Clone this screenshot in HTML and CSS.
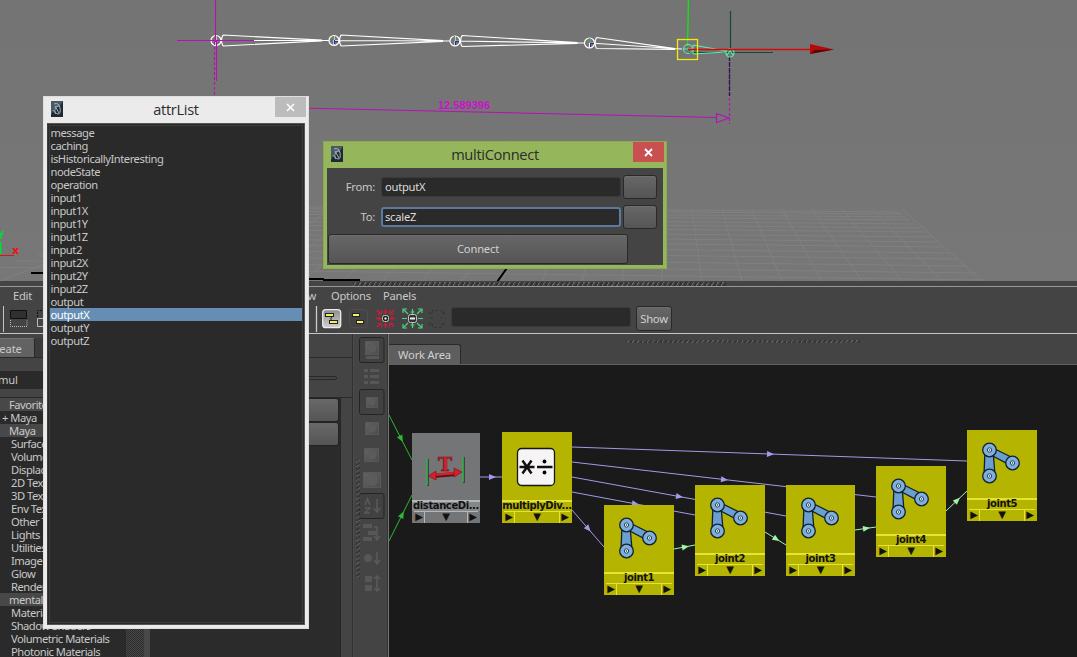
FILE: index.html
```html
<!DOCTYPE html>
<html lang="en">
<head>
<meta charset="utf-8">
<title>Hypershade</title>
<link rel="stylesheet" href="styles.css">
<script src="app.js" defer></script>
</head>
<body>
<svg width="0" height="0" class="defs">
  <defs>
    <symbol id="joint" viewBox="0 0 44 44">
      <g stroke="#102030" stroke-width="1.3" fill="#6b9fcf">
        <path d="M12 6L34 17L31 24L10 13Z"/>
        <path d="M6 9H14L16 34H5Z"/>
        <circle cx="10.5" cy="9" r="6.8" fill="#7fb0dd"/><circle cx="33.5" cy="22" r="6.8" fill="#7fb0dd"/><circle cx="10.5" cy="35" r="6.8" fill="#7fb0dd"/>
      </g>
      <g fill="#e8f4fc" stroke="#24465f" stroke-width="1"><circle cx="10.5" cy="9" r="2.2"/><circle cx="33.5" cy="22" r="2.2"/><circle cx="10.5" cy="35" r="2.2"/></g>
      <g fill="#17303f"><circle cx="10.5" cy="9" r=".8"/><circle cx="33.5" cy="22" r=".8"/><circle cx="10.5" cy="35" r=".8"/></g>
    </symbol>
    <linearGradient id="ball" x1="0" y1="0" x2="1" y2="1"><stop offset="0" stop-color="#626262"/><stop offset="1" stop-color="#4c4c4c"/></linearGradient>
    <linearGradient id="lit" x1="0" y1="0" x2="0" y2="1"><stop offset="0" stop-color="#8c8c8c"/><stop offset="1" stop-color="#d0d0d0"/></linearGradient>
    <symbol id="logo" viewBox="0 0 12 16">
      <rect width="12" height="16" fill="#202a33"/><path d="M0 0H12L9 5L3 8L0 14Z" fill="#4b5962"/>
      <path d="M3 3Q8 1 9 7T7 13Q3 12 4 8T8 5M4 5L8 12M2 9L5 13" fill="none" stroke="#a4b3bc" stroke-width="1"/>
    </symbol>
  </defs>
</svg>

<main class="app">
  <section class="viewport">
    <svg class="scene" width="1077" height="281" viewBox="0 0 1077 281">
      <g id="grid" stroke="#808080" stroke-width="1" fill="none"></g>
      <g stroke="#000" stroke-width="2"><path d="M31 273H44M309 279H324M323 280H360M507 268L497 282"/></g>
      <g id="bones" stroke="#fff" fill="none" stroke-width="1.2"></g>
      <g stroke="#b80fb8" stroke-width="1.1" fill="none">
        <path d="M215.500 0V42M177 40.500H254M216.500 40V81"/>
        <path d="M214.500 42V96M729.500 58V124" stroke-dasharray="3 2"/>
        <path d="M300 108L717 117.500M716.500 113.500V122.500L729 118Z"/>
      </g>
      <text x="438" y="109" class="measure">12.589396</text>
      <path d="M333.500 36V40M454.500 36V41M589.500 38V43" stroke="#3aa85a"/>
      <path d="M334 41.500H338M334.500 40V44M455 41.500H459M455.500 41V45M590 43.500H594M590.500 43V47" stroke="#2a2aa0"/>
      <path d="M730.500 11V50M689 52.500H773" stroke="#124a32" stroke-width="1.2"/>
      <path d="M729.500 56V96" stroke="#2a1650" stroke-dasharray="5 1" stroke-width="1.3"/>
      <path d="M688.500 0L687.500 46" stroke="#16e016" stroke-width="1.4"/>
      <g stroke="#5df0a8" fill="none" stroke-width="1.1"><circle cx="688" cy="49" r="4.500"/><path d="M693 45L726 51M693 54L726 52M693 45V54M684 49H693"/><circle cx="730" cy="53" r="4"/><path d="M727 55L730 51L733 55"/></g>
      <path d="M688 49.500H811" stroke="#d90808" stroke-width="1.5"/><path d="M810 44L834 49.500L810 54Z" fill="#b80808"/><path d="M810 54L834 49.500L815 50Z" fill="#520808"/>
      <rect x="677.500" y="39.500" width="20" height="20" fill="none" stroke="#f2ea10" stroke-width="1.3"/>
      <path d="M0 242V254" stroke="#00e030" stroke-width="3"/><path d="M0 255.500H14" stroke="#d01818"/>
      <path d="M-1 231L1 236L3 231M1 235V239" stroke="#00e030" stroke-width="1.500" fill="none"/>
      <text x="12" y="254" class="axis">x</text>
    </svg>
  </section>

  <section class="shade">
    <div class="topgrip"><i></i></div>
    <nav class="menu"><span>Edit</span><span class="m2">View</span><span class="m3">Options</span><span>Panels</span></nav>
    <div class="toolbar">
      <svg width="45" height="28" viewBox="0 305 45 28" class="t-left"><path d="M3.500 306V332" stroke="#c4c4c4"/><path d="M10.500 310.500H26.500V318.500H10.500Z" fill="#303030" stroke="#101010"/><path d="M10.500 320V326.500H27V320" stroke="#bbb" fill="none" stroke-dasharray="1 1"/><path d="M45 318.500H37.500V326.500H45" stroke="#bbb" fill="none"/><path d="M45 310.500H37.500V318" stroke="#111" stroke-dasharray="2 1" fill="none"/></svg>
      <svg width="142" height="28" viewBox="309 305 142 28">
        <path d="M316.500 306V332" stroke="#ccc" stroke-width="1.3"/>
        <rect x="322.700" y="309.700" width="18" height="18" rx="3" fill="url(#lit)" stroke="#ececec" stroke-width="1.300"/>
        <path d="M333 315L331 318V322" stroke="#222" fill="none"/>
        <g fill="#f5f06a" stroke="#222" stroke-width="1"><rect x="325.500" y="313.500" width="8" height="3"/><rect x="329.500" y="320.500" width="8" height="3"/><rect x="352.500" y="313.500" width="7" height="3"/><rect x="356.500" y="320.500" width="7" height="3"/></g>
        <rect x="349.500" y="309.500" width="18" height="18" rx="3" fill="none" stroke="#4f4f4f"/>
        <g stroke="#d81838" fill="none" stroke-width="1.4"><path d="M385.500 309V314M385.500 328V323M376 318.500H381M395 318.500H390M377 310L381 314M394 310L390 314M377 327L381 323M394 327L390 323"/><path d="M377.500 314H381.500V310M393.500 314H389.500V310M377.500 323.500H381.500V327.500M393.500 323.500H389.500V327.500M383.500 312H387.500M383.500 325H387.500M379 316.500V320.500M392 316.500V320.500" stroke-width="1"/></g>
        <rect x="382.500" y="315.500" width="6" height="6" rx="2" fill="#222" stroke="#c8c8c8"/><rect x="384.500" y="317.500" width="2" height="2" fill="#fff"/>
        <g stroke="#4fd582" fill="none" stroke-width="1.2"><path d="M412.500 309V314M412.500 328V323M402 318.500H407M423 318.500H418M403.500 309.500L408 314M421.500 309.500L417 314M403.500 327.500L408 323M421.500 327.500L417 323"/><path d="M403 313V309H407M422 313V309H418M403 324V328H407M422 324V328H418M410.500 312H414.500M410.500 325H414.500"/></g>
        <rect x="408.500" y="314.500" width="8" height="8" rx="2" fill="#333" stroke="#c8c8c8"/><path d="M410 318.500H415" stroke="#eee" stroke-width="2"/>
        <g stroke="#363636" fill="none"><path d="M432.500 313V310.500H441.500V313M432.500 324V327.500H441.500V324M430 318H435M440 318H446" stroke-dasharray="3 2"/><path d="M429 311V315L433 313ZM445 311V315L441 313ZM429 322V326L433 324ZM445 322V326L441 324Z" fill="#3a3a3a" stroke="none"/></g>
      </svg>
      <div class="filter"></div>
      <button class="btn show">Show</button>
    </div>

    <div class="body">
      <aside class="left">
        <div class="tabs"><span class="ltab">Create</span><span class="ltab2"></span></div>
        <div class="search">mul</div>
        <div class="split">
          <ul class="tree" id="tree"></ul>
          <div class="scroll"></div>
          <div class="creator"><b></b><b></b></div>
        </div>
        <div class="slider"></div>
      </aside>
      <div class="rail">
        <i class="vgrip"></i>
        <svg width="26" height="260" viewBox="0 0 26 260">
          <g fill="#414141" stroke="#242424"><rect x=".5" y=".5" width="24.500" height="25" rx="2"/><rect x=".5" y="52.500" width="24.500" height="25" rx="2"/><rect x=".5" y="156.500" width="24.500" height="25" rx="2"/></g>
          <g fill="url(#ball)" stroke="#585858"><rect x="6.500" y="4.500" width="13" height="13"/><rect x="7.500" y="60.500" width="11" height="10"/><rect x="6.500" y="85.500" width="13" height="12"/><rect x="5.500" y="111.500" width="14" height="13"/><rect x="4.500" y="135.500" width="17" height="15"/></g>
          <g fill="#5b5b5b"><circle cx="13" cy="11" r="4.500"/><circle cx="13" cy="65.500" r="3"/><circle cx="13" cy="91.500" r="4"/><circle cx="13" cy="118" r="4.500"/><circle cx="13" cy="143" r="6"/></g>
          <g fill="#575757"><path d="M7 19H20V22H7ZM5 32H9V35H5ZM11 32H20V35H11ZM5 38H9V41H5ZM11 38H20V41H11ZM5 44H9V47H5ZM11 44H20V47H11Z"/><rect x="4" y="187" width="9" height="4"/><rect x="9" y="194" width="9" height="4"/><rect x="4" y="200" width="9" height="4"/><circle cx="9" cy="221" r="4"/><rect x="6" y="239" width="7" height="6"/><rect x="6" y="248" width="7" height="6"/></g>
          <path d="M18 162V174M14.500 171L18 175L21 171M15 190H18V202M15 199L18 203L21 199M18 215V226M15 223L18 227L21 223M18 240V253M15 242L18 239L21 242M15 251L18 254L21 251M6 168L8.500 162L11 168M6 171H11L6 176H11" stroke="#5a5a5a" stroke-width="1.500" fill="none"/>
        </svg>
      </div>
      <div class="work">
        <div class="workhead"><span class="wtab">Work Area</span><i class="dots"></i></div>
        <div class="canvas">
          <svg class="wires" width="688" height="292" viewBox="389 365 688 292" id="wires"></svg>
          <div class="node gray" style="left:23px;top:68px">
            <svg class="dist" width="44" height="34" viewBox="0 0 44 34"><path d="M4 5V32M40 3V29" stroke="#111"/><path d="M3 5V31M39 3V28" stroke="#35b244" stroke-width="1.500"/><path d="M9 22L32 20" stroke="#5d0c14" stroke-width="4"/><path d="M9 21L32 19" stroke="#d71f2c" stroke-width="2.500"/><path d="M4 22L12 17V26ZM38 18L30 14V23Z" fill="#d71f2c" stroke="#6b141a" stroke-width=".6"/><text x="14" y="17" class="tee">T</text></svg>
            <span class="name">distanceDi...</span><span class="foot"><i>▶</i><i>▼</i><i>▶</i></span>
          </div>
          <div class="node" style="left:113px;top:67px">
            <svg class="mult" width="40" height="40" viewBox="0 0 40 40"><rect x="1.500" y="1.500" width="37" height="37" rx="4" fill="#f6f4f4" stroke="#161616" stroke-width="1.300"/><path d="M3.500 20H18.500M6.500 13.500L15.500 26.500M15.500 13.500L6.500 26.500M21 20H36.500" stroke="#111" stroke-width="2.500"/><circle cx="28.500" cy="14.500" r="1.900"/><circle cx="28.500" cy="25.500" r="1.900"/></svg>
            <span class="name">multiplyDiv...</span><span class="foot"><i>▶</i><i>▼</i><i>▶</i></span>
          </div>
          <div class="node" style="left:215px;top:140px;height:90px"><svg class="jt" width="44" height="44"><use href="#joint"/></svg><span class="name">joint1</span><span class="foot"><i>▶</i><i>▼</i><i>▶</i></span></div>
          <div class="node" style="left:306px;top:120px"><svg class="jt" width="44" height="44"><use href="#joint"/></svg><span class="name">joint2</span><span class="foot"><i>▶</i><i>▼</i><i>▶</i></span></div>
          <div class="node" style="left:397px;top:120px;width:69px"><svg class="jt" width="44" height="44"><use href="#joint"/></svg><span class="name">joint3</span><span class="foot"><i>▶</i><i>▼</i><i>▶</i></span></div>
          <div class="node" style="left:487px;top:101px"><svg class="jt" width="44" height="44"><use href="#joint"/></svg><span class="name">joint4</span><span class="foot"><i>▶</i><i>▼</i><i>▶</i></span></div>
          <div class="node" style="left:578px;top:65px"><svg class="jt" width="44" height="44"><use href="#joint"/></svg><span class="name">joint5</span><span class="foot"><i>▶</i><i>▼</i><i>▶</i></span></div>
        </div>
      </div>
    </div>
  </section>
</main>

<section class="win attr">
  <header><svg class="logo" width="12" height="16"><use href="#logo"/></svg><h1>attrList</h1><span class="close"><svg width="9" height="9"><path d="M1 1L8 8M8 1L1 8" stroke="#fff" stroke-width="1.600"/></svg></span></header>
  <ul class="list">
    <li>message</li><li>caching</li><li>isHistoricallyInteresting</li><li>nodeState</li><li>operation</li><li>input1</li><li>input1X</li><li>input1Y</li><li>input1Z</li><li>input2</li><li>input2X</li><li>input2Y</li><li>input2Z</li><li>output</li><li class="sel">outputX</li><li>outputY</li><li>outputZ</li>
  </ul>
</section>

<section class="win multi">
  <header><svg class="logo" width="12" height="16"><use href="#logo"/></svg><h1>multiConnect</h1><span class="close"><svg width="9" height="9"><path d="M1 1L8 8M8 1L1 8" stroke="#fff" stroke-width="1.800"/></svg></span></header>
  <div class="form">
    <div class="row"><label>From:</label><div class="field">outputX</div><button class="btn"></button></div>
    <div class="row"><label>To:</label><div class="field focus">scaleZ</div><button class="btn"></button></div>
    <button class="btn connect">Connect</button>
  </div>
</section>
</body>
</html>
```
FILE: styles.css
```css
* { box-sizing: border-box; }
html, body { margin: 0; height: 657px; overflow: hidden; }
body { position: relative; width: 1077px; background: #444; color: #c8c8c8; font: 11.2px/13px "Noto Sans", "Open Sans", sans-serif; letter-spacing: -.5px; }
ul { list-style: none; margin: 0; padding: 0; }
i { font-style: normal; }
.defs { position: absolute; }
.app { display: flex; flex-direction: column; height: 657px; }
.viewport { height: 281px; flex: none; background: linear-gradient(#747474, #777); overflow: hidden; }
.scene { display: block; }
.measure { font: bold 11px "Liberation Sans", sans-serif; fill: #cc10cc; letter-spacing: 0; }
.axis { font: bold 11px "DejaVu Sans", sans-serif; fill: #f01010; }

.btn { border: 1px solid #292929; border-radius: 3px; background: linear-gradient(#676767, #555); color: #d0d0d0; font: inherit; letter-spacing: -.2px; padding: 0; box-shadow: inset 0 1px #6f6f6f; }
.shade { flex: 1; min-height: 0; display: flex; flex-direction: column; background: #444; }
.topgrip { height: 6px; flex: none; border-bottom: 1px solid #989898; padding-left: 353px; }
.topgrip i, .dots { display: block; background: repeating-linear-gradient(120deg, #303030 0 2px, #707070 2px 3px, #444 3px 4.3px); }
.topgrip i { width: 373px; height: 4px; margin-top: 1px; opacity: .8; }
.menu { display: flex; height: 18px; flex: none; padding-left: 13px; line-height: 18px; letter-spacing: -.25px; }
.m2 { width: 283px; text-align: right; margin-right: 15px; }
.m3 { width: 52px; }
.menu span:first-child { width: 20px; }
.toolbar { display: flex; height: 29px; flex: none; border-bottom: 1px solid #c6c6c6; }
.t-left { margin-right: 264px; }
.toolbar svg { flex: none; }
.filter { width: 180px; height: 20px; margin-top: 2px; background: #2a2a2a; border: 1px solid #3b3b3b; border-radius: 3px; }
.show { width: 36px; height: 25px; margin: 1px 0 0 5px; }

.body { flex: 1; min-height: 0; display: flex; }
.left { width: 353px; flex: none; position: relative; display: flex; flex-direction: column; border-right: 1px solid #303030; }
.tabs { display: flex; height: 24px; flex: none; padding-top: 4px; margin-bottom: 13px; border-bottom: 1px solid #2a2a2a; letter-spacing: -.1px; }
.ltab { width: 35px; background: #626262; border-right: 1px solid #292929; border-top: 1px solid #737373; line-height: 20px; text-indent: -12px; overflow: hidden; border-radius: 0 3px 0 0; }
.ltab2 { width: 60px; background: #3b3b3b; }
.search { height: 18px; flex: none; width: 150px; background: #2a2a2a; line-height: 18px; margin-bottom: 8px; text-indent: -2px; letter-spacing: -.2px; }
.split { display: flex; flex: 1; min-height: 0; border-top: 1px solid #2a2a2a; }
.tree { width: 126px; flex: none; background: #2a2a2a; }
.tree li { height: 13px; padding-left: 11px; white-space: nowrap; }
.tree li.h { background: #484848; padding-left: 9px; }
.scroll { width: 25px; flex: none; background: linear-gradient(90deg, transparent 18px, #484848 18px 24px, #2a2a2a 24px), repeating-conic-gradient(#484848 0 25%, #2d2d2d 0 50%) 0 0/2px 2px; }
.creator { width: 190px; background: #2b2b2b; border-right: 1px solid #252525; padding-right: 1px; }
.creator b { display: block; height: 24px; border: 1px solid #222; border-radius: 3px; background: linear-gradient(#686868, #555); }
.slider { position: absolute; right: 15px; top: 42px; width: 60px; height: 4px; border: 1px solid #292929; border-radius: 2px; }
.rail { width: 35px; flex: none; padding: 3px 0 0 6px; position: relative; border-left: 1px solid #4c4c4c; border-right: 1px solid #343434; }
.rail svg { display: block; margin-left: -1px; }
.vgrip { position: absolute; left: 2px; top: 126px; width: 4px; height: 119px; background: repeating-linear-gradient(150deg, #303030 0 1.5px, #5e5e5e 1.5px 2.5px, #444 2.5px 4px); opacity: .75; }
.work { flex: 1; min-width: 0; display: flex; flex-direction: column; border-left: 1px solid #747474; }
.workhead { height: 31px; flex: none; display: flex; border-bottom: 1px solid #606060; }
.wtab { width: 72px; margin-top: 10px; background: #5e5e5e; border: solid #292929; border-width: 1px 1px 0 0; border-radius: 0 3px 0 0; line-height: 20px; text-align: center; color: #d0d0d0; letter-spacing: -.2px; }
.dots { width: 234px; height: 3px; margin: 6px 0 0 165px; opacity: .6; }
.canvas { position: relative; flex: 1; background: #1a1a1a; overflow: hidden; }
.wires { display: block; }
.node { position: absolute; width: 70px; height: 91px; background: #b5b400; color: #111; display: flex; flex-direction: column; justify-content: flex-end; --l: #e4e434; }
.node.gray { width: 68px; height: 90px; background: #737577; --l: #b4b6b8; }
.gray .name { background: #858789; }
.node svg { position: absolute; left: 12px; top: 11px; }
.node .jt { left: 11.500px; }
.node .dist { left: 12px; top: 21px; }
.node .mult { left: 14px; top: 15px; }
.name { height: 11px; border-top: 2px solid var(--l); font: bold 10px/7px "DejaVu Sans", sans-serif; letter-spacing: -.4px; text-align: center; white-space: nowrap; border-image: linear-gradient(90deg, transparent 2px, var(--l) 2px 68px, transparent 68px) 2; }
.foot { height: 12px; margin: 0 2px; border-top: 1px solid var(--l); display: grid; grid-template-columns: 10px 1fr 10px; font: 10px/9px "DejaVu Sans", sans-serif; letter-spacing: 0; text-align: center; }
.foot i:nth-child(2) { border: solid var(--l); border-width: 0 1px; }
.tee { font: bold 19px "DejaVu Serif", serif; fill: #d71f2c; stroke: #65141a; stroke-width: .6px; }

.win { position: absolute; display: flex; flex-direction: column; }
.win header { display: flex; flex: none; position: relative; }
.win h1 { flex: 1; margin: 0; font: 14.6px/27px "Open Sans", sans-serif; letter-spacing: -.3px; text-align: center; color: #2c2c2c; }
.logo { position: absolute; left: 4px; top: 5px; }
.close { position: absolute; right: -1px; top: 1px; width: 31px; height: 20px; display: flex; align-items: center; justify-content: center; }
.attr { left: 43px; top: 96px; width: 266px; height: 533px; padding: 0 4px 4px; background: #ebebeb; box-shadow: inset 0 0 0 1px #dedede; }
.attr header, .multi header { height: 27px; }
.attr .close { background: #bcbcbc; }
.list { flex: 1; background: #2a2a2a; border: 1px solid #555; border-left-color: #3c3c3c; outline: 1px solid #3c3c3c; outline-offset: -3px; padding: 2px 2px 0; }
.list li { height: 13px; padding-left: .5px; letter-spacing: -.45px; }
.list .sel { background: #668db3; color: #fff; }
.multi { left: 323px; top: 141px; width: 344px; height: 128px; padding: 0 4px 4px; background: #96b65c; box-shadow: inset 0 0 0 1px #8aaa50; }
.multi .close { background: #c85050; }
.form { flex: 1; background: #444; padding: 7px 0 0 1px; display: flex; flex-direction: column; letter-spacing: -.25px; }
.row { display: flex; height: 23px; margin-bottom: 7px; align-items: center; }
.row label { width: 47px; text-align: right; margin-right: 6px; }
.field { width: 240px; height: 20px; padding-left: 3px; line-height: 18px; background: #2a2a2a; border: 1px solid #3b3b3b; border-radius: 3px; margin-right: 2px; color: #ddd; }
.focus { border: 2px solid #5b7a9d; line-height: 16px; padding-left: 2px; }
.row .btn { width: 34px; height: 24px; }
.connect { width: 300px; height: 30px; margin-top: -1px; line-height: 26px; }
```
FILE: app.js
```js
const NS = "http://www.w3.org/2000/svg";
const add = (parent, tag, attrs) => {
  const el = document.createElementNS(NS, tag);
  for (const k in attrs) el.setAttribute(k, attrs[k]);
  parent.appendChild(el);
  return el;
};

// Perspective ground grid
const grid = document.getElementById("grid");
[0, 2, 5, 8, 12, 16, 20, 25, 30, 35, 41, 47, 54, 61, 68].forEach(d =>
  add(grid, "path", { d: `M${200 - d * 3} ${206 + d * .9}L${900 + d * 1.24} ${212 + d}` }));
for (let i = -11; i < 9; i++)
  add(grid, "path", { d: `M${662 + i * 30} ${209}L${662 + i * 40} 281` });
add(grid, "path", { d: "M0 281L44 264" });

// Skeleton chain
const bones = document.getElementById("bones");
const pts = [[216, 40.5], [334, 40.5], [455, 41], [589.5, 43], [687, 49]];
pts.slice(0, -1).forEach(([x, y], i) => {
  const [nx, ny] = pts[i + 1];
  add(bones, "circle", { cx: x, cy: y, r: 5 });
  add(bones, "path", { d: `M${x + 7} ${y - 5.5}L${nx - 12} ${ny - .3}M${x + 7} ${y + 5.5}L${nx - 12} ${ny + .3}M${x} ${y}L${nx - 5} ${ny}M${x} ${y - 5}V${y + 5}M${x + 7} ${y - 5.5}Q${x + 4} ${y} ${x + 7} ${y + 5.5}` });
});

// Node connections
const wires = document.getElementById("wires");
[
  [572, 447, 967, 461, 770, "#a19be8"], [572, 462, 876, 497, 724, "#a19be8"],
  [572, 477, 786, 516, 679, "#a19be8"], [572, 492, 695, 515, 635, "#a19be8"],
  [572, 510, 604, 547, 588, "#a19be8"], [480, 477, 502, 477, 492, "#a19be8"],
  [674, 549, 695, 545, 685, "#a0f5a8"], [765, 532, 786, 545, 776, "#a0f5a8"],
  [855, 530, 876, 527, 866, "#a0f5a8"], [946, 511, 967, 491, 957, "#a0f5a8"],
  [389, 415, 412, 460, 401, "#2fb92f"], [389, 541, 412, 495, 402, "#2fb92f"]
].forEach(([x1, y1, x2, y2, ax, c]) => {
  const ay = y1 + (y2 - y1) * (ax - x1) / (x2 - x1);
  const a = Math.atan2(y2 - y1, x2 - x1) * 180 / Math.PI;
  add(wires, "path", { d: `M${x1} ${y1}L${x2} ${y2}`, stroke: c });
  add(wires, "path", { d: "M-3 -3L4 0L-3 3Z", fill: c, transform: `translate(${ax} ${ay}) rotate(${a})` });
});

// Node category tree
const heads = ["Favorites", "Maya", "mental ray"];
["Favorites", "+ Maya", "Maya", "Surface", "Volumetric", "Displacement", "2D Textures", "3D Textures", "Env Textures", "Other Textures", "Lights", "Utilities", "Image Planes", "Glow", "Rendering", "mental ray", "Materials", "Shadow Shaders", "Volumetric Materials", "Photonic Materials"].forEach(t => {
  const li = document.createElement("li");
  li.textContent = t;
  if (heads.includes(t)) li.className = "h";
  if (t[0] === "+") li.style.paddingLeft = "2px";
  document.getElementById("tree").appendChild(li);
});
```
